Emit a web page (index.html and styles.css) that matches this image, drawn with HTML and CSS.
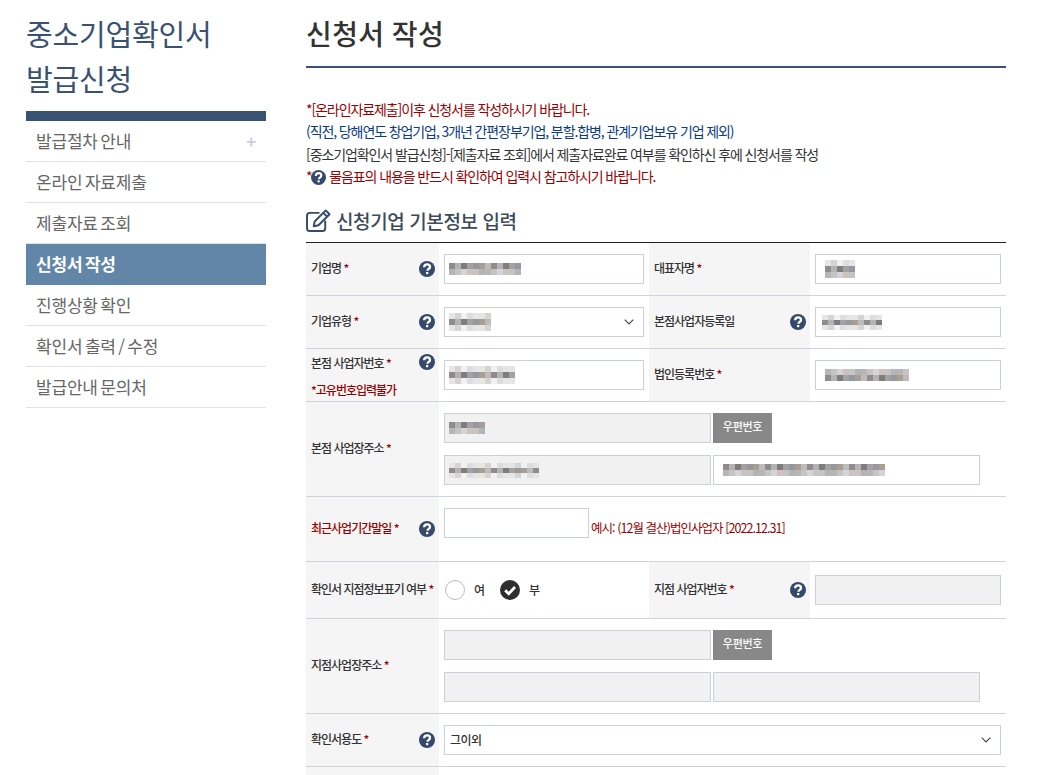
FILE: index.html
```html
<!DOCTYPE html>
<html lang="ko">
<head>
<meta charset="utf-8">
<title>신청서 작성</title>
<link rel="stylesheet" href="styles.css">
</head>
<body>
<svg class="defs" width="0" height="0" aria-hidden="true">
  <defs>
    <symbol id="help" viewBox="0 0 16 16">
      <circle cx="8" cy="8" r="8" fill="#34496b"/>
      <path d="M5.100 6.300C5.200 4.400 6.500 3.400 8.100 3.400c1.700 0 2.900 1 2.900 2.500 0 1.200-.7 1.700-1.500 2.200-.7.4-1 .8-1 1.700" fill="none" stroke="#fff" stroke-width="2.300"/>
      <rect x="7" y="11" width="2.300" height="2.200" fill="#fff"/>
    </symbol>
    <symbol id="chev" viewBox="0 0 10 6">
      <path d="M.7.7 5 5 9.300.7" fill="none" stroke="#444" stroke-width="1.100"/>
    </symbol>
    <pattern id="dk" width="42" height="6" patternUnits="userSpaceOnUse">
      <rect width="42" height="6" fill="#a3a2a2"/>
      <rect width="6" height="6" fill="#8f8d8c"/>
      <rect x="6" width="6" height="6" fill="#b3b3b6"/>
      <rect x="12" width="6" height="6" fill="#7f7d7c"/>
      <rect x="24" width="6" height="6" fill="#96979f"/>
      <rect x="30" width="6" height="6" fill="#a89f90"/>
      <rect x="36" width="6" height="6" fill="#bcbcbc"/>
    </pattern>
    <pattern id="md" width="36" height="6" patternUnits="userSpaceOnUse">
      <rect width="36" height="6" fill="#c6c4c3"/>
      <rect width="6" height="6" fill="#b8b6b4"/>
      <rect x="12" width="6" height="6" fill="#d3d3d8"/>
      <rect x="18" width="6" height="6" fill="#ccc4bc"/>
      <rect x="30" width="6" height="6" fill="#b2b4b8"/>
    </pattern>
    <pattern id="lt" width="30" height="6" patternUnits="userSpaceOnUse">
      <rect width="30" height="6" fill="#e6e5e4"/>
      <rect x="6" width="6" height="6" fill="#d4d4d4"/>
      <rect x="12" width="6" height="6" fill="#f1f1f1"/>
      <rect x="18" width="6" height="6" fill="#dcdde0"/>
    </pattern>
  </defs>
</svg>
<div class="page">
  <aside class="side">
    <h2 class="side-title">중소기업확인서<br>발급신청</h2>
    <ul class="nav">
      <li class="nav-item"><span>발급절차 안내</span><span class="plus">+</span></li>
      <li class="nav-item"><span>온라인 자료제출</span></li>
      <li class="nav-item"><span>제출자료 조회</span></li>
      <li class="nav-item active"><span>신청서 작성</span></li>
      <li class="nav-item"><span>진행상황 확인</span></li>
      <li class="nav-item"><span>확인서 출력 / 수정</span></li>
      <li class="nav-item"><span>발급안내 문의처</span></li>
    </ul>
  </aside>
  <main class="main">
    <h1 class="title">신청서 작성</h1>
    <div class="notice">
      <p class="red">*[온라인자료제출]이후 신청서를 작성하시기 바랍니다.</p>
      <p class="blue">(직전, 당해연도 창업기업, 3개년 간편장부기업, 분할.합병, 관계기업보유 기업 제외)</p>
      <p>[중소기업확인서 발급신청]-[제출자료 조회]에서 제출자료완료 여부를 확인하신 후에 신청서를 작성</p>
      <p class="red">*<svg class="ic-inline"><use href="#help"/></svg> 물음표의 내용을 반드시 확인하여 입력시 참고하시기 바랍니다.</p>
    </div>
    <h3 class="section">
      <svg class="edit" viewBox="0 0 26 24" fill="none" stroke="#34496b" stroke-width="2">
        <path d="M14 4H4a3 3 0 0 0-3 3v13a3 3 0 0 0 3 3h13a3 3 0 0 0 3-3v-8"/>
        <path d="M9 13 20.500 1.500l4 4L13 17l-5 1z" stroke-linejoin="round"/>
        <path d="M18 4l4 4"/>
      </svg>
      신청기업 기본정보 입력
    </h3>
    <div class="form">
      <div class="row pair">
        <div class="lab"><span>기업명 <i>*</i></span><svg class="ic"><use href="#help"/></svg></div>
        <div class="val"><div class="inp"><svg class="mos" width="72" height="12"><rect width="72" height="6" fill="url(#dk)"/><rect y="6" width="72" height="6" fill="url(#md)"/></svg></div></div>
        <div class="lab"><span>대표자명 <i>*</i></span></div>
        <div class="val"><div class="inp"><svg class="mos m0" width="30" height="18"><rect width="30" height="6" fill="url(#lt)"/><rect y="6" width="30" height="6" fill="url(#dk)"/><rect y="12" width="30" height="6" fill="url(#md)"/></svg></div></div>
      </div>
      <div class="row pair">
        <div class="lab"><span>기업유형 <i>*</i></span><svg class="ic"><use href="#help"/></svg></div>
        <div class="val"><div class="inp sel"><svg class="mos" width="42" height="18"><rect width="42" height="6" fill="url(#lt)"/><rect y="6" width="42" height="6" fill="url(#dk)"/><rect y="12" width="42" height="6" fill="url(#lt)"/></svg><svg class="chev"><use href="#chev"/></svg></div></div>
        <div class="lab"><span>본점사업자등록일</span><svg class="ic"><use href="#help"/></svg></div>
        <div class="val"><div class="inp"><svg class="mos m1" width="60" height="15"><rect width="60" height="5" fill="url(#lt)"/><rect y="5" width="60" height="5" fill="url(#dk)"/><rect y="10" width="60" height="5" fill="url(#lt)"/></svg></div></div>
      </div>
      <div class="row pair">
        <div class="lab lab-top"><span>본점 사업자번호 <i>*</i></span><svg class="ic"><use href="#help"/></svg><em class="warn">*고유번호입력불가</em></div>
        <div class="val"><div class="inp"><svg class="mos" width="66" height="18"><rect width="66" height="6" fill="url(#lt)"/><rect y="6" width="66" height="6" fill="url(#dk)"/><rect y="12" width="66" height="6" fill="url(#lt)"/></svg></div></div>
        <div class="lab"><span>법인등록번호 <i>*</i></span></div>
        <div class="val"><div class="inp"><svg class="mos m0" width="84" height="12"><rect width="84" height="6" fill="url(#md)"/><rect y="6" width="84" height="6" fill="url(#dk)"/></svg></div></div>
      </div>
      <div class="row wide">
        <div class="lab"><span>본점 사업장주소 <i>*</i></span></div>
        <div class="val stack">
          <div class="line"><div class="inp dis addr"><svg class="mos" width="36" height="12"><rect width="36" height="6" fill="url(#dk)"/><rect y="6" width="36" height="6" fill="url(#md)"/></svg></div><div class="btn">우편번호</div></div>
          <div class="line"><div class="inp dis addr"><svg class="mos" width="90" height="15"><rect width="90" height="5" fill="url(#lt)"/><rect y="5" width="90" height="5" fill="url(#dk)"/><rect y="10" width="90" height="5" fill="url(#lt)"/></svg></div><div class="inp addr"><svg class="mos m0" width="162" height="12"><rect width="162" height="6" fill="url(#dk)"/><rect y="6" width="162" height="6" fill="url(#md)"/></svg></div></div>
        </div>
      </div>
      <div class="row wide tall">
        <div class="lab"><span class="red-b">최근사업기간말일 <i>*</i></span><svg class="ic"><use href="#help"/></svg></div>
        <div class="val"><div class="line line-ex"><div class="inp short"></div><span class="ex">예시: (12월 결산)법인사업자 [2022.12.31]</span></div></div>
      </div>
      <div class="row pair mid">
        <div class="lab"><span>확인서 지점정보표기 여부 <i>*</i></span></div>
        <div class="val radios">
          <span class="radio"></span><span class="rlab">여</span>
          <svg class="checked" viewBox="0 0 20 20"><circle cx="10" cy="10" r="10" fill="#2e2e2e"/><path d="M5.200 10.200 8.700 13.700 15 7" fill="none" stroke="#fff" stroke-width="2.800"/></svg><span class="rlab">부</span>
        </div>
        <div class="lab"><span>지점 사업자번호 <i>*</i></span><svg class="ic"><use href="#help"/></svg></div>
        <div class="val"><div class="inp dis"></div></div>
      </div>
      <div class="row wide">
        <div class="lab"><span>지점사업장주소 <i>*</i></span></div>
        <div class="val stack">
          <div class="line"><div class="inp dis addr"></div><div class="btn">우편번호</div></div>
          <div class="line"><div class="inp dis addr"></div><div class="inp dis addr"></div></div>
        </div>
      </div>
      <div class="row wide">
        <div class="lab"><span>확인서용도 <i>*</i></span><svg class="ic"><use href="#help"/></svg></div>
        <div class="val"><div class="inp sel full"><span class="seltext">그이외</span><svg class="chev"><use href="#chev"/></svg></div></div>
      </div>
      <div class="row wide">
        <div class="lab"></div>
        <div class="val"></div>
      </div>
    </div>
  </main>
</div>
</body>
</html>
```
FILE: styles.css
```css
* { box-sizing: border-box; }
html, body { margin: 0; padding: 0; background: #fff; }
body {
  font-family: "Noto Sans CJK KR", "Noto Sans", sans-serif;
  color: #333;
  overflow: hidden;
}
.defs { position: absolute; }
.page {
  display: flex;
  height: 775px;
  overflow: hidden;
  padding-left: 26px;
  gap: 40px;
}
.side { width: 240px; flex: none; }
.side-title {
  margin: 11px 0 10px;
  font-size: 29px;
  font-weight: 400;
  line-height: 45px;
  letter-spacing: -0.2px;
  color: #3a5272;
}
.nav {
  list-style: none;
  margin: 0;
  padding: 0;
  border-top: 10px solid #3a5272;
}
.nav-item {
  height: 41px;
  padding: 0 10px 2px;
  display: flex;
  justify-content: space-between;
  align-items: center;
  font-size: 17px;
  letter-spacing: -0.2px;
  word-spacing: -2px;
  color: #666;
  border-bottom: 1px solid #e2e2e2;
}
.nav-item.active {
  background: #6286a8;
  color: #fff;
  font-weight: 700;
  border-bottom-color: #6286a8;
}
.plus { color: #c9cfdb; font-size: 17px; font-weight: 700; }
.main { width: 700px; flex: none; }
.title {
  margin: 0;
  height: 68px;
  padding-top: 11px;
  font-size: 28px;
  font-weight: 500;
  line-height: 44px;
  letter-spacing: 0.4px;
  word-spacing: -1px;
  color: #333;
  border-bottom: 2px solid #3a5272;
}
.notice {
  margin-top: 30px;
  font-size: 14px;
  line-height: 22.300px;
  letter-spacing: -1.1px;
}
.notice p { margin: 0; }
.red { color: #990000; }
.blue { color: #0b3b80; }
.ic-inline { width: 15px; height: 15px; vertical-align: -3px; }
.section {
  display: flex;
  align-items: center;
  gap: 5px;
  margin: 14px 0 0;
  height: 42px;
  font-size: 19px;
  font-weight: 500;
  letter-spacing: -0.4px;
  color: #3d4a5a;
  border-bottom: 1px solid #222;
  padding-bottom: 2px;
}
.edit { width: 25px; height: 23px; flex: none; }
.row {
  display: grid;
  border-bottom: 1px solid #cfd3da;
}
.pair { grid-template-columns: 133px 210px 161px 196px; }
.wide { grid-template-columns: 133px 567px; }
.lab {
  background: #f5f5f5;
  display: flex;
  align-items: center;
  justify-content: space-between;
  padding: 0 4px 0 5px;
  font-size: 12px;
  font-weight: 500;
  letter-spacing: -1px;
  color: #333;
  position: relative;
}
.lab > span { padding-bottom: 3px; }
.lab > .ic { margin-bottom: 0; }
.lab i { font-style: normal; color: #990000; }
.lab-top { align-items: flex-start; flex-wrap: wrap; padding-top: 5px; align-content: flex-start; }
.warn {
  width: 100%;
  margin-top: 7px;
  font-style: normal;
  color: #990000;
}
.red-b { color: #990000; }
.ic { width: 16px; height: 16px; flex: none; }
.val { padding: 11px 5px; }
.tall .val { padding-bottom: 23px; }
.mid .val { padding: 13px 5px; }
.stack { display: flex; flex-direction: column; gap: 12px; }
.line { display: flex; gap: 2px; }
.line-ex { align-items: flex-end; }
.inp {
  height: 30px;
  border: 1px solid #cbd0d9;
  background: #fff;
  display: flex;
  align-items: center;
  padding-left: 4px;
  position: relative;
  flex: none;
}
.dis { background: #f1f1f1; }
.addr { width: 267px; }
.short { width: 145px; }
.full { width: 557px; }
.sel { justify-content: space-between; padding-right: 9px; }
.mos { display: block; }
.m0 { margin-left: 5px; }
.m1 { margin-left: 2px; }
.chev { width: 10px; height: 6px; }
.seltext { font-size: 12px; font-weight: 500; letter-spacing: -0.5px; padding: 0 0 2px 1px; }
.btn {
  width: 59px;
  height: 30px;
  background: #888;
  color: #fff;
  font-size: 11px;
  font-weight: 500;
  text-align: center;
  line-height: 27px;
  letter-spacing: -0.3px;
}
.ex { font-size: 12.500px; letter-spacing: -0.95px; color: #990000; line-height: 20px; }
.radios { display: flex; align-items: center; padding-left: 6px !important; }
.radio {
  width: 20px;
  height: 20px;
  border-radius: 50%;
  border: 1px solid #bbb;
  background: #fff;
}
.checked { width: 20px; height: 20px; }
.rlab { font-size: 12px; width: 35px; padding: 0 0 1px 9px; font-weight: 500; }
```
